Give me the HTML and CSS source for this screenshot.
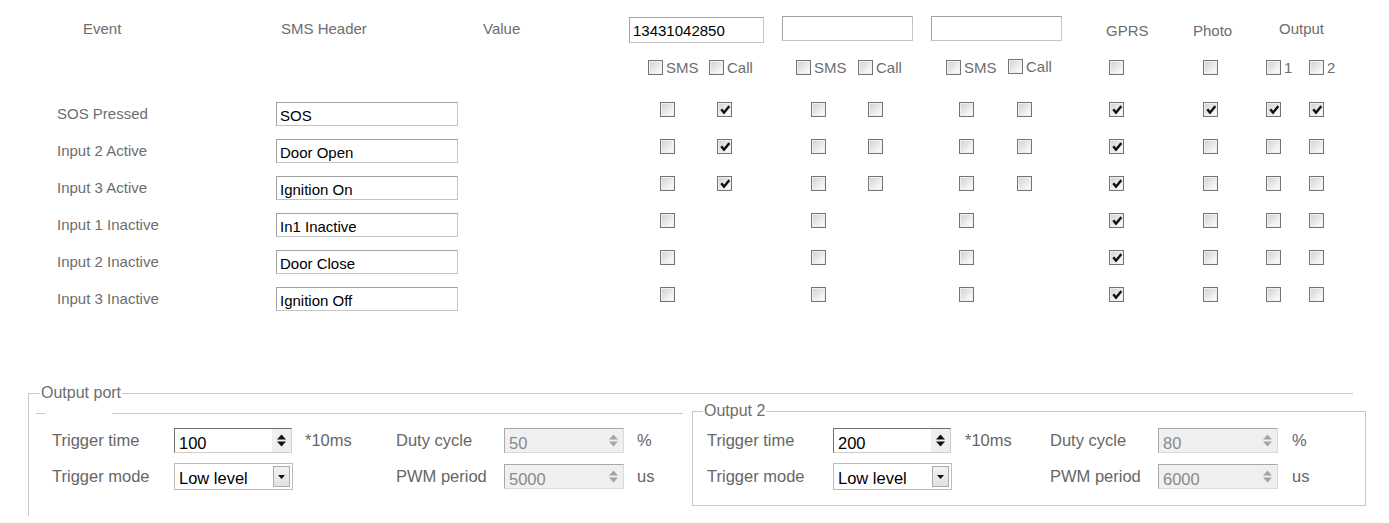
FILE: index.html
```html
<!DOCTYPE html>
<html lang="en">
<head>
    <meta charset="UTF-8">
    <meta name="viewport" content="width=device-width, initial-scale=1.0">
    <title>Event Settings</title>
    <link rel="stylesheet" href="styles.css">
</head>
<body>

<div class="head">
    <span class="hi">Event</span>
    <span class="hi">SMS Header</span>
    <span class="hi">Value</span>
    <input class="phone first" type="text" value="13431042850">
    <input class="phone" type="text" value="">
    <input class="phone" type="text" value="">
    <span class="low">GPRS</span>
    <span class="low">Photo</span>
    <span class="hi">Output</span>
</div>

<div class="opts">
    <span class="opt"><span class="cb"></span>SMS</span>
    <span class="opt"><span class="cb"></span>Call</span>
    <span class="opt"><span class="cb"></span>SMS</span>
    <span class="opt"><span class="cb"></span>Call</span>
    <span class="opt"><span class="cb"></span>SMS</span>
    <span class="opt up"><span class="cb"></span>Call</span>
    <span class="opt"><span class="cb"></span></span>
    <span class="opt"><span class="cb"></span></span>
    <span class="opt"><span class="cb"></span>1</span>
    <span class="opt"><span class="cb"></span>2</span>
</div>

<div class="rows">
    <div class="row">
        <span class="lbl">SOS Pressed</span>
        <input class="hdr" type="text" value="SOS">
        <span class="cb"></span>
        <span class="cb"><svg viewBox="0 0 11 11"><polygon points="1.2,5.6 3.1,4.1 4.6,6.1 8.7,1.2 10.3,2.7 4.6,9.6"/></svg></span>
        <span class="cb"></span>
        <span class="cb"></span>
        <span class="cb"></span>
        <span class="cb"></span>
        <span class="cb"><svg viewBox="0 0 11 11"><polygon points="1.2,5.6 3.1,4.1 4.6,6.1 8.7,1.2 10.3,2.7 4.6,9.6"/></svg></span>
        <span class="cb"><svg viewBox="0 0 11 11"><polygon points="1.2,5.6 3.1,4.1 4.6,6.1 8.7,1.2 10.3,2.7 4.6,9.6"/></svg></span>
        <span class="cb"><svg viewBox="0 0 11 11"><polygon points="1.2,5.6 3.1,4.1 4.6,6.1 8.7,1.2 10.3,2.7 4.6,9.6"/></svg></span>
        <span class="cb"><svg viewBox="0 0 11 11"><polygon points="1.2,5.6 3.1,4.1 4.6,6.1 8.7,1.2 10.3,2.7 4.6,9.6"/></svg></span>
    </div>
    <div class="row">
        <span class="lbl">Input 2 Active</span>
        <input class="hdr" type="text" value="Door Open">
        <span class="cb"></span>
        <span class="cb"><svg viewBox="0 0 11 11"><polygon points="1.2,5.6 3.1,4.1 4.6,6.1 8.7,1.2 10.3,2.7 4.6,9.6"/></svg></span>
        <span class="cb"></span>
        <span class="cb"></span>
        <span class="cb"></span>
        <span class="cb"></span>
        <span class="cb"><svg viewBox="0 0 11 11"><polygon points="1.2,5.6 3.1,4.1 4.6,6.1 8.7,1.2 10.3,2.7 4.6,9.6"/></svg></span>
        <span class="cb"></span>
        <span class="cb"></span>
        <span class="cb"></span>
    </div>
    <div class="row">
        <span class="lbl">Input 3 Active</span>
        <input class="hdr" type="text" value="Ignition On">
        <span class="cb"></span>
        <span class="cb"><svg viewBox="0 0 11 11"><polygon points="1.2,5.6 3.1,4.1 4.6,6.1 8.7,1.2 10.3,2.7 4.6,9.6"/></svg></span>
        <span class="cb"></span>
        <span class="cb"></span>
        <span class="cb"></span>
        <span class="cb"></span>
        <span class="cb"><svg viewBox="0 0 11 11"><polygon points="1.2,5.6 3.1,4.1 4.6,6.1 8.7,1.2 10.3,2.7 4.6,9.6"/></svg></span>
        <span class="cb"></span>
        <span class="cb"></span>
        <span class="cb"></span>
    </div>
    <div class="row">
        <span class="lbl">Input 1 Inactive</span>
        <input class="hdr" type="text" value="In1 Inactive">
        <span class="cb"></span>
        <span></span>
        <span class="cb"></span>
        <span></span>
        <span class="cb"></span>
        <span></span>
        <span class="cb"><svg viewBox="0 0 11 11"><polygon points="1.2,5.6 3.1,4.1 4.6,6.1 8.7,1.2 10.3,2.7 4.6,9.6"/></svg></span>
        <span class="cb"></span>
        <span class="cb"></span>
        <span class="cb"></span>
    </div>
    <div class="row">
        <span class="lbl">Input 2 Inactive</span>
        <input class="hdr" type="text" value="Door Close">
        <span class="cb"></span>
        <span></span>
        <span class="cb"></span>
        <span></span>
        <span class="cb"></span>
        <span></span>
        <span class="cb"><svg viewBox="0 0 11 11"><polygon points="1.2,5.6 3.1,4.1 4.6,6.1 8.7,1.2 10.3,2.7 4.6,9.6"/></svg></span>
        <span class="cb"></span>
        <span class="cb"></span>
        <span class="cb"></span>
    </div>
    <div class="row">
        <span class="lbl">Input 3 Inactive</span>
        <input class="hdr" type="text" value="Ignition Off">
        <span class="cb"></span>
        <span></span>
        <span class="cb"></span>
        <span></span>
        <span class="cb"></span>
        <span></span>
        <span class="cb"><svg viewBox="0 0 11 11"><polygon points="1.2,5.6 3.1,4.1 4.6,6.1 8.7,1.2 10.3,2.7 4.6,9.6"/></svg></span>
        <span class="cb"></span>
        <span class="cb"></span>
        <span class="cb"></span>
    </div>
</div>

<fieldset class="port">
    <legend>Output port</legend>
    <div class="groups">
        <fieldset class="out out1">
            <legend></legend>
            <div class="fields">
                <span>Trigger time</span>
                <div class="spin"><span class="val">100</span><span class="arrows"><svg viewBox="0 0 9 12"><polygon points="0,5 4.5,0 9,5"/><polygon points="0,7 4.5,12 9,7"/></svg></span></div>
                <span>*10ms</span>
                <span>Duty cycle</span>
                <div class="spin off"><span class="val">50</span><span class="arrows"><svg viewBox="0 0 9 12"><polygon points="0,5 4.5,0 9,5"/><polygon points="0,7 4.5,12 9,7"/></svg></span></div>
                <span>%</span>
                <span>Trigger mode</span>
                <div class="combo"><span class="val">Low level</span><span class="drop"><svg viewBox="0 0 7 4"><polygon points="0,0 7,0 3.5,4"/></svg></span></div>
                <span></span>
                <span>PWM period</span>
                <div class="spin off"><span class="val">5000</span><span class="arrows"><svg viewBox="0 0 9 12"><polygon points="0,5 4.5,0 9,5"/><polygon points="0,7 4.5,12 9,7"/></svg></span></div>
                <span>us</span>
            </div>
        </fieldset>
        <fieldset class="out out2">
            <legend>Output 2</legend>
            <div class="fields">
                <span>Trigger time</span>
                <div class="spin"><span class="val">200</span><span class="arrows"><svg viewBox="0 0 9 12"><polygon points="0,5 4.5,0 9,5"/><polygon points="0,7 4.5,12 9,7"/></svg></span></div>
                <span>*10ms</span>
                <span>Duty cycle</span>
                <div class="spin off"><span class="val">80</span><span class="arrows"><svg viewBox="0 0 9 12"><polygon points="0,5 4.5,0 9,5"/><polygon points="0,7 4.5,12 9,7"/></svg></span></div>
                <span>%</span>
                <span>Trigger mode</span>
                <div class="combo"><span class="val">Low level</span><span class="drop"><svg viewBox="0 0 7 4"><polygon points="0,0 7,0 3.5,4"/></svg></span></div>
                <span></span>
                <span>PWM period</span>
                <div class="spin off"><span class="val">6000</span><span class="arrows"><svg viewBox="0 0 9 12"><polygon points="0,5 4.5,0 9,5"/><polygon points="0,7 4.5,12 9,7"/></svg></span></div>
                <span>us</span>
            </div>
        </fieldset>
    </div>
</fieldset>

</body>
</html>
```

FILE: styles.css
```css
body {
    font-family: "Liberation Sans", Arial, sans-serif;
    font-size: 15px;
    color: #6d6d6d;
    background: #fff;
    margin: 0;
    padding: 0;
    overflow: hidden;
}
input {
    font-family: inherit;
    font-size: 15px;
    color: #000;
    box-sizing: border-box;
    border: 1px solid #aaa;
    border-color: #a2a2a2 #c4c4c4 #c4c4c4 #a2a2a2;
    background: #fff;
    margin: 0;
    padding: 2px 3px 0;
    outline: none;
}
.head {
    display: grid;
    grid-template-columns: 198px 202px 146px 153px 149px 175px 87px 86px auto;
    align-items: center;
    height: 27px;
    margin-top: 16px;
    padding-left: 83px;
}
.head .hi {
    margin-top: -3px;
}
.head .low {
    padding-top: 1px;
}
.phone {
    width: 131px;
    height: 25px;
    margin-top: -2px;
}
.phone.first {
    width: 135px;
    height: 26px;
    margin-top: 0;
}
.opts {
    display: grid;
    grid-template-columns: 61px 87px 62px 88px 62px 101px 94px 63px 43px auto;
    align-items: center;
    height: 19px;
    margin-top: 15px;
    padding-left: 648px;
}
.opt {
    display: flex;
    align-items: center;
    gap: 3px;
}
.opt.up {
    margin-top: -3px;
}
.cb {
    flex: none;
    width: 15px;
    height: 15px;
    box-sizing: border-box;
    border: 1px solid #747474;
    background: linear-gradient(135deg, #cfcfcf, #f8f8f8 80%);
    box-shadow: inset 0 0 0 1px #f0f0f0;
    display: inline-flex;
    align-items: center;
    justify-content: center;
}
.cb svg {
    width: 12px;
    height: 12px;
    fill: #111;
}
.rows {
    margin-top: 25px;
}
.row {
    display: grid;
    grid-template-columns: 276px 384px 57px 94px 57px 91px 58px 92px 94px 63px 43px auto;
    align-items: start;
    height: 37px;
}
.lbl {
    padding-left: 57px;
    line-height: 24px;
}
.hdr {
    width: 182px;
    height: 24px;
}
.port {
    box-sizing: border-box;
    width: 1325px;
    min-width: 0;
    margin: 60px 0 0 28px;
    padding: 0 0 10px 7px;
    border: 1px solid #c8c8c8;
    border-right: none;
    border-bottom: none;
}
legend {
    font-size: 16px;
    line-height: 18px;
    color: #6d6d6d;
    padding: 0 1px;
}
.port > legend {
    margin-left: 4px;
}
.groups {
    display: flex;
    align-items: flex-start;
}
.out {
    box-sizing: border-box;
    flex: none;
    min-width: 0;
    margin: 0;
    border: 1px solid #c8c8c8;
}
.out1 {
    width: 647px;
    margin-top: 2px;
    padding: 6px 0 0 9px;
    border-left: none;
    border-right: none;
    border-bottom: none;
}
.out1 legend {
    width: 67px;
    height: 18px;
    padding: 0;
}
.out2 {
    width: 674px;
    margin-left: 9px;
    padding: 8px 0 15px 10px;
}
.fields {
    display: grid;
    grid-template-columns: 122px 131px 91px 108px 133px auto;
    grid-template-rows: 25px 27px;
    row-gap: 10px;
    align-items: center;
    margin-left: 7px;
    font-size: 16.5px;
    color: #666;
}
.out2 .fields {
    grid-template-columns: 126px 132px 85px 108px 134px auto;
    margin-left: 4px;
}
.spin, .combo {
    display: flex;
    box-sizing: border-box;
    height: 25px;
    width: 118px;
    background: #fff;
    border: 1px solid #7a7a7a;
    border-color: #6f6f6f #cdcdcd #cdcdcd #6f6f6f;
}
.val {
    flex: 1;
    font-size: 16.5px;
    line-height: 25px;
    padding: 2px 0 0 4px;
    color: #000;
}
.arrows {
    width: 19px;
    background: #efefef;
    display: flex;
    align-items: center;
    justify-content: center;
}
.arrows svg {
    width: 9px;
    height: 13px;
    fill: #111;
}
.spin.off {
    width: 120px;
    background: #f0f0f0;
    border-color: #a8a8a8 #dadada #dadada #a8a8a8;
}
.spin.off .val {
    color: #8a8a8a;
}
.spin.off .arrows svg {
    fill: #a4a4a4;
}
.combo {
    height: 27px;
    width: 119px;
    border-color: #bdbdbd;
    align-items: center;
}
.combo .val {
    line-height: 27px;
    padding: 4px 0 0 4px;
}
.drop {
    width: 17px;
    height: 21px;
    margin-right: 2px;
    box-sizing: border-box;
    border: 1px solid #ababab;
    background: linear-gradient(#f2f2f2, #e2e2e2);
    display: flex;
    align-items: center;
    justify-content: center;
}
.drop svg {
    width: 7px;
    height: 4px;
    fill: #111;
}
```
